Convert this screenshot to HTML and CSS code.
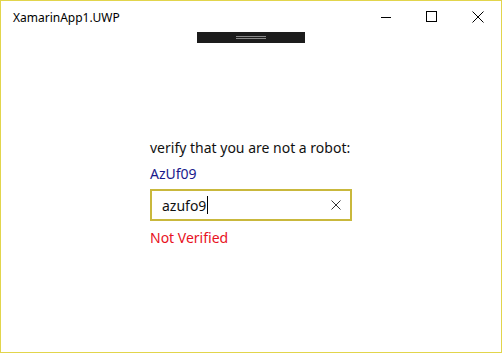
FILE: index.html
```html
<!DOCTYPE html>
<html lang="en">
<head>
  <meta charset="UTF-8">
  <title>XamarinApp1.UWP</title>
  <link rel="stylesheet" href="styles.css">
</head>
<body>
  <div class="window">
    <div class="title-bar">
      <span class="title">XamarinApp1.UWP</span>
      <div class="caption-buttons">
        <button class="caption-btn">
          <svg width="12" height="12" viewBox="0 0 12 12"><path d="M1 6.5h10" stroke="#000" stroke-width="1"/></svg>
        </button>
        <button class="caption-btn">
          <svg width="12" height="12" viewBox="0 0 12 12"><rect x="0.5" y="0.5" width="10" height="10" fill="none" stroke="#000" stroke-width="1"/></svg>
        </button>
        <button class="caption-btn">
          <svg width="12" height="12" viewBox="0 0 12 12"><path d="M0.5 0.5l11 11M11.5 0.5l-11 11" stroke="#000" stroke-width="1"/></svg>
        </button>
      </div>
    </div>
    <div class="grip-row">
      <div class="grip">
        <span class="grip-line"></span>
        <span class="grip-line"></span>
      </div>
    </div>

    <div class="content">
      <div class="form">
        <p class="prompt">verify that you are not a robot:</p>
        <p class="captcha">AzUf09</p>
        <div class="text-box">
          <span class="text-value">azufo9</span><span class="caret"></span>
          <svg class="clear" width="10" height="10" viewBox="0 0 10 10"><path d="M0.5 0.5l9 9M9.5 0.5l-9 9" stroke="#333" stroke-width="1"/></svg>
        </div>
        <p class="status">Not Verified</p>
      </div>
    </div>
  </div>
</body>
</html>
```

FILE: styles.css
```css
* {
  box-sizing: border-box;
}

body {
  margin: 0;
  font-family: "Noto Sans", "Open Sans", sans-serif;
  background-color: #ffffff;
}

.window {
  width: 502px;
  height: 353px;
  border: 1px solid #e2d54c;
  display: flex;
  flex-direction: column;
}

.title-bar {
  height: 31px;
  display: flex;
  align-items: center;
  justify-content: space-between;
}

.title {
  font-size: 12px;
  color: #000;
  padding-left: 12px;
  padding-top: 1px;
}

.caption-buttons {
  display: flex;
  height: 100%;
}

.caption-btn {
  width: 46px;
  height: 100%;
  border: none;
  background: none;
  padding: 0;
  display: flex;
  align-items: center;
  justify-content: center;
}

.grip-row {
  display: flex;
  justify-content: center;
}

.grip {
  width: 108px;
  height: 11px;
  background-color: #1c1c1c;
  display: flex;
  flex-direction: column;
  align-items: center;
  justify-content: center;
  gap: 1px;
}

.grip-line {
  display: block;
  width: 30px;
  height: 1px;
  background-color: #8a8a8a;
}

.content {
  flex: 1;
  display: flex;
  justify-content: center;
  padding-top: 95px;
}

.form {
  width: 202px;
  display: flex;
  flex-direction: column;
}

.form p {
  margin: 0;
  white-space: nowrap;
}

.prompt {
  font-size: 14px;
  color: #111;
  line-height: 20px;
}

.captcha {
  font-size: 14px;
  color: #1a1a8c;
  line-height: 20px;
  margin-top: 6px !important;
}

.text-box {
  margin-top: 5px;
  height: 32px;
  border: 2px solid #c9b83c;
  display: flex;
  align-items: center;
  padding-left: 10px;
  padding-right: 9px;
  font-size: 14px;
}

.text-value {
  color: #111;
}

.caret {
  display: inline-block;
  width: 1px;
  height: 18px;
  background-color: #000;
  margin-left: 1px;
}

.clear {
  margin-left: auto;
}

.status {
  font-size: 14px;
  color: #e81123;
  line-height: 20px;
  margin-top: 7px !important;
}
```
